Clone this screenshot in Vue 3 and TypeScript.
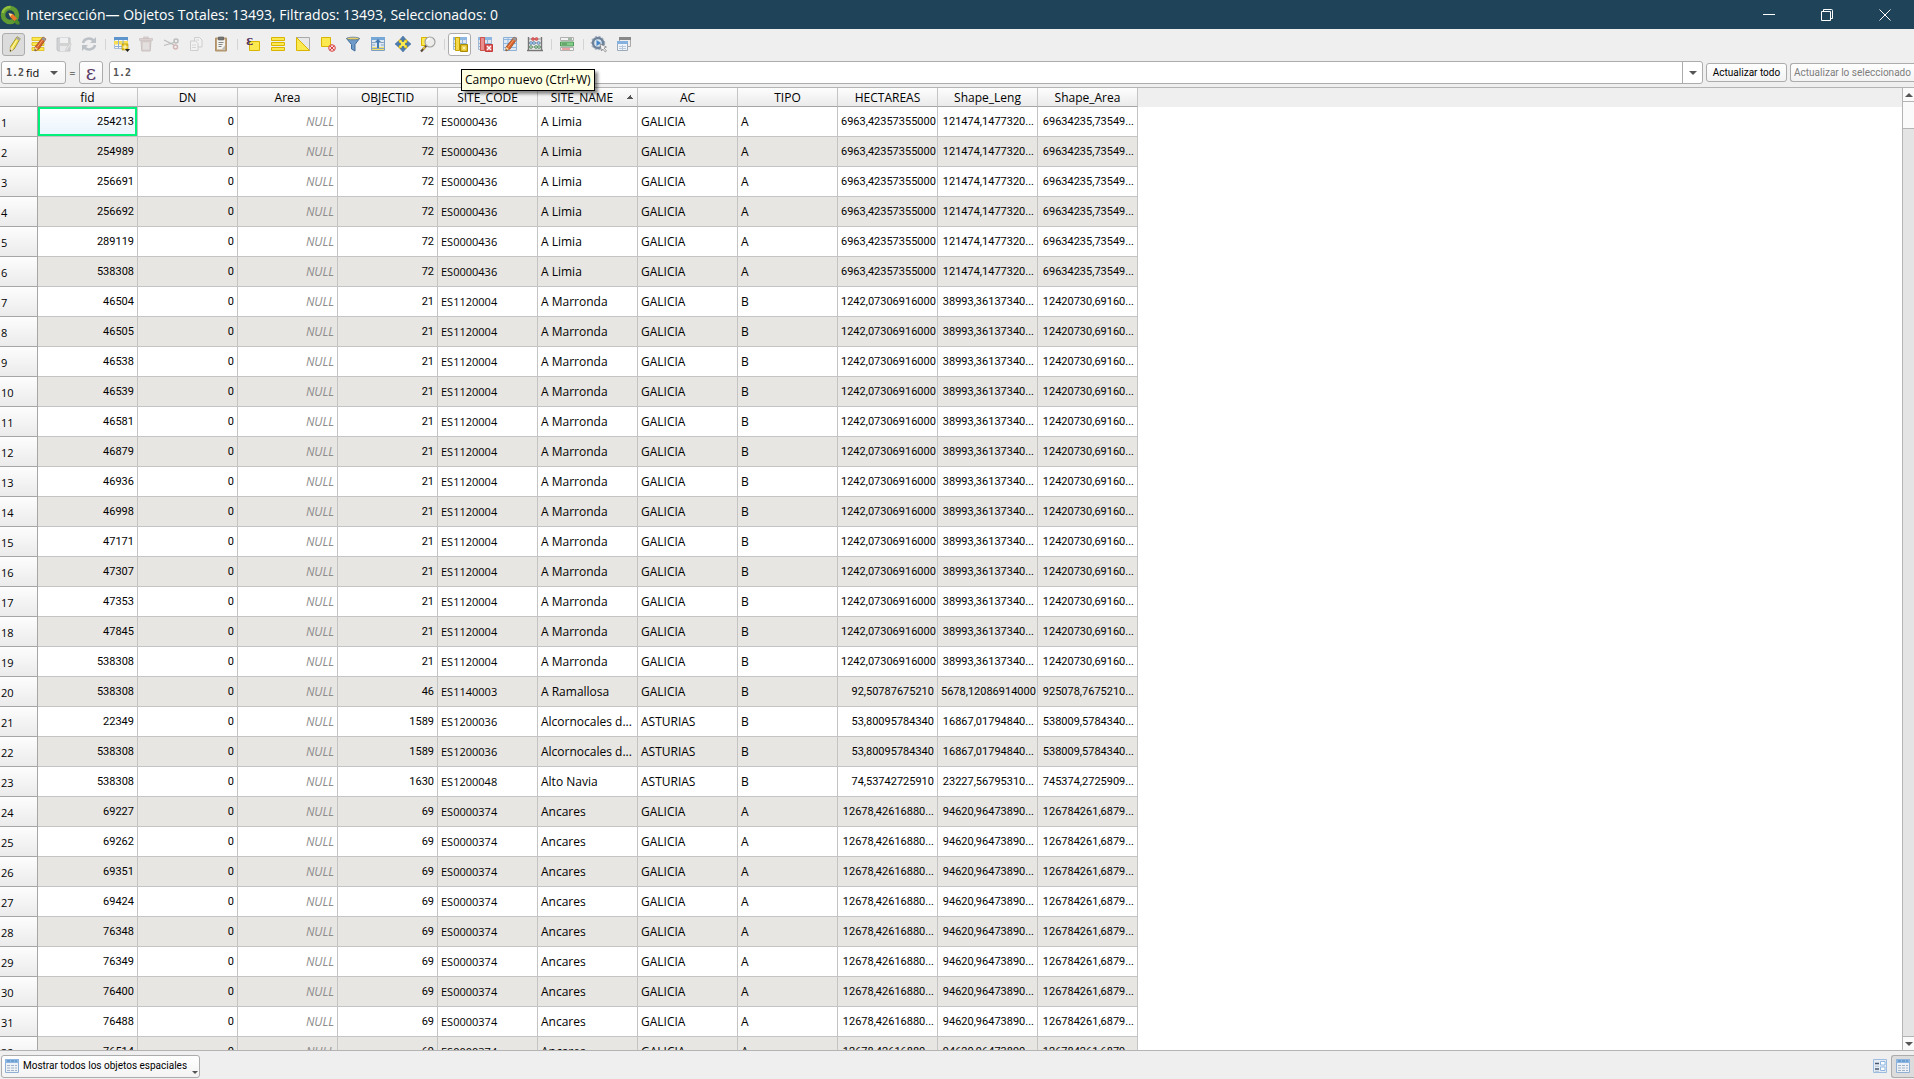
<script setup lang="ts">
import { ref } from 'vue'

interface Site {
  objectId: number
  code: string
  name: string
  region: string
  kind: string
  hectares: string
  length: string
  area: string
  fids: number[]
}

const sites: Site[] = [
  { objectId: 72, code: 'ES0000436', name: 'A Limia', region: 'GALICIA', kind: 'A', hectares: '6963,42357355000', length: '121474,1477320...', area: '69634235,73549...', fids: [254213, 254989, 256691, 256692, 289119, 538308] },
  { objectId: 21, code: 'ES1120004', name: 'A Marronda', region: 'GALICIA', kind: 'B', hectares: '1242,07306916000', length: '38993,36137340...', area: '12420730,69160...', fids: [46504, 46505, 46538, 46539, 46581, 46879, 46936, 46998, 47171, 47307, 47353, 47845, 538308] },
  { objectId: 46, code: 'ES1140003', name: 'A Ramallosa', region: 'GALICIA', kind: 'B', hectares: '92,50787675210', length: '5678,12086914000', area: '925078,7675210...', fids: [538308] },
  { objectId: 1589, code: 'ES1200036', name: 'Alcornocales d...', region: 'ASTURIAS', kind: 'B', hectares: '53,80095784340', length: '16867,01794840...', area: '538009,5784340...', fids: [22349, 538308] },
  { objectId: 1630, code: 'ES1200048', name: 'Alto Navia', region: 'ASTURIAS', kind: 'B', hectares: '74,53742725910', length: '23227,56795310...', area: '745374,2725909...', fids: [538308] },
  { objectId: 69, code: 'ES0000374', name: 'Ancares', region: 'GALICIA', kind: 'A', hectares: '12678,42616880...', length: '94620,96473890...', area: '126784261,6879...', fids: [69227, 69262, 69351, 69424, 76348, 76349, 76400, 76488, 76514] },
]

const rows = sites.flatMap((site) => site.fids.map((fid) => ({ ...site, fid })))
const columns = ['fid', 'DN', 'Area', 'OBJECTID', 'SITE_CODE', 'SITE_NAME', 'AC', 'TIPO', 'HECTAREAS', 'Shape_Leng', 'Shape_Area']

const field = ref('fid')
const expression = ref('')

const YELLOW = 'fill="#fce94f" stroke="#d9b500"'
const grid = '<path d="M1.5 1.5h13v12h-13z" fill="#dfe6ee" stroke="#a3bad2"/><path d="M1 1h14v3H1z" fill="#8db6e0"/><path d="M2 7.500h12M2 10.500h12M10.500 4v9" stroke="#8fb4da"/><path d="M3.500 1.500h4v13h-4z" fill="#f5d94a" stroke="#c4a000"/>'
const table = '<path d="M1.5 1.5h13v13h-13z" fill="#eef2f6" stroke="#8fb0d4"/><path d="M1 1h14v4H1z" fill="#8db6e0"/><path d="M3 3h3M7 3h3M11 3h2" stroke="#4f86c0"/><path d="M3 7.5h3M7 7.5h3M11 7.5h2M3 10h3M7 10h3M11 10h2M3 12.500h3M7 12.500h3M11 12.500h2" stroke="#9eb3c8"/>'
const pencil = '<path d="M12 1l3 2-7 10-4 2 0-4z" fill="#d9622b" stroke="#8d4522" stroke-width=".7"/><path d="M12 1l3 2-1.500 2-3-2z" fill="#999"/><path d="M4 11l3 2-3.500 2z" fill="#f4d9a0"/><path d="M4 13l1 1-1.500 1z" fill="#222"/><path d="M11.500 4L6 11.500" stroke="#f5a06a"/>'

const icons: Record<string, string> = {
  edit: '<path d="M11 .8l3.200 1.800-6 10.400-4 2.500.2-4.700z" fill="#f1df4b" stroke="#8c8420" stroke-width=".8"/><path d="M11 .8l3.200 1.800-1.200 2-3-1.800z" fill="#aaa"/><path d="M4.500 11l3 2-3.300 2.500z" fill="#f5e3bd"/><path d="M4.200 13.500l1 1-1.200 1z" fill="#222"/><path d="M10.500 4.500l-4.500 7.500" stroke="#fffbc0"/>',
  multi: `<path d="M1 1.500h12v3H1zM1 6.500h12v3H1zM1 11.500h12v3H1z" ${YELLOW} stroke-width=".7"/>${pencil}`,
  save: '<g opacity=".45"><path d="M1 2h13v13H2l-1-1z" fill="#aeb1b5" stroke="#909398"/><path d="M4 2h8v5H4z" fill="#f2f2f2"/><path d="M4 10h7v5H4z" fill="#e2e2e2"/><path d="M14 7l1.500 1-4 6-2 1 .3-2z" fill="#d5d5d5" stroke="#999" stroke-width=".6"/></g>',
  reload: '<g fill="none" stroke="#bcc1c7" stroke-width="2.600"><path d="M2 7a6 5.500 0 0 1 10.500-2.500M14 9a6 5.500 0 0 1-10.500 2.500"/></g><path d="M15 1v6H9zM1 15V9h6z" fill="#bcc1c7"/>',
  addRow: '<path d="M1.500 1.500h13v11h-13z" fill="#f3f5f7" stroke="#a8bdd4"/><path d="M1 1h14v3H1z" fill="#5e94cc"/><path d="M1 5h14v3.500H1z" fill="#f7dd52"/><path d="M2 10.500h8M5.500 4v8M10 4v8" stroke="#8fb0d4"/><path d="M9 8h6v6H9z" fill="#e8c520" stroke="#a98d00" stroke-width=".6"/><path d="M12 8.500v5M9.500 11h5" stroke="#fffbd0"/><path d="M12 13h5l-2.500 3z" fill="#222"/>',
  trash: '<g opacity=".5"><path d="M3 5h10l-.8 10H3.800z" fill="#c6b3b3" stroke="#a99797"/><path d="M1.500 2.500h13v2h-13zM5.500 1h5v1.500h-5z" fill="#c6b3b3" stroke="#a99797" stroke-width=".7"/><path d="M6 6.500v7M8 6.500v7M10 6.500v7" stroke="#eee"/></g>',
  cut: '<g fill="none" stroke="#bcbcbc"><path d="M1 4l10 5M1 9.500l10-3" stroke-width="1.300"/><circle cx="13" cy="5" r="2" stroke-width="1.500"/><circle cx="12.500" cy="11" r="2" stroke="#d3b5b5" stroke-width="1.500"/></g>',
  copy: '<g fill="#f2f2f2" stroke="#cecece"><path d="M6.500 1.500h5l2.500 2.500v7H6.500z"/><path d="M2.500 5h5L10 7.500v7H2.500z"/><path d="M4 9h4M4 11.500h4M8 4h3" stroke-width=".8"/></g>',
  paste: '<path d="M2.500 2h11v13h-11z" fill="#bda078" stroke="#b0926a"/><path d="M4 3.500h8v10H4z" fill="#f2f2ee"/><path d="M5.500 1h5v3h-5z" fill="#777" stroke="#555" stroke-width=".6"/><path d="M5.500 6.500h5M5.500 8.500h4M5.500 10.500h3" stroke="#888"/><path d="M8.500 13.500l3.500-4v4z" fill="#bbb"/>',
  selExpr: `<path d="M4.500 5.500h10v9h-10z" ${YELLOW}/><text x="1" y="9" font-family="DejaVu Serif,serif" font-size="12" font-weight="bold" fill="#5a3a66">ε</text>`,
  selAll: `<path d="M1.500 1.500h13v3h-13zM1.500 6.500h13v3h-13zM1.500 11.500h13v3h-13z" ${YELLOW}/>`,
  invert: '<path d="M1.500 1.500h13v13z" fill="#e8e8e8" stroke="#aaa"/><path d="M1.500 1.500l13 13h-13z" fill="#fce94f" stroke="#d9b500"/>',
  deselect: `<path d="M1.500 1.500h9v9h-9z" ${YELLOW}/><circle cx="12" cy="12" r="3.300" fill="#f8dcdc" stroke="#d94141"/><path d="M10 10l4 4M14 10l-4 4" stroke="#d94141"/>`,
  filter: '<path d="M1.500 2.500h13L10 8.500v6.500l-3.500-2V8.500z" fill="#6f9bc8" stroke="#416e9e"/><ellipse cx="8" cy="2.500" rx="6.500" ry="1.300" fill="#e9ce65" stroke="#58789a" stroke-width=".8"/>',
  top: '<path d="M1.500 1.500h13v13h-13z" fill="#dce7f2" stroke="#7d9fc4"/><path d="M1 1h14v3H1z" fill="#77a7d7"/><path d="M2 11h12v3H2z" fill="#f0e06a"/><path d="M2 6.500h3M11 6.500h3M2 9h3M11 9h3M2 12.500h12" stroke="#8ba5c0"/><path d="M8 3l3.500 3.500H9V12H7V6.500H4.500z" fill="#4178b0"/>',
  pan: `<path d="M4 4h8v8H4z" ${YELLOW}/><path d="M8 0l3 3.500H9v2H7v-2H5zM8 16l-3-3.500h2v-2h2v2h2zM0 8l3.500-3v2h2v2h-2v2zM16 8l-3.500 3V9h-2V7h2V5z" fill="#4f7fb4" stroke="#365f8c" stroke-width=".5"/>`,
  zoomSel: `<path d="M1.500 1.500h8v8h-8z" ${YELLOW}/><path d="M6.500 9.500L1 15.500" stroke="#5a4a38" stroke-width="2.200"/><path d="M5 11l-2 2" stroke="#e0be3a" stroke-width="2"/><circle cx="10" cy="6" r="5" fill="#ececea" stroke="#a2a2a0" stroke-width="1.200"/><path d="M7 5a3 3 0 0 1 3-2.500" fill="none" stroke="#fff" stroke-width="1.400"/>`,
  newField: `${grid}<path d="M8.500 8.500h7v7h-7z" fill="#ddb91b" stroke="#a88b06"/><path d="M12 9.500v5M9.500 12h5M10.300 10.300l3.400 3.400M13.700 10.300l-3.400 3.400" stroke="#fff8b8" stroke-width=".8"/>`,
  delField: `${grid}<path d="M3.500 1.500h4v13h-4z" fill="#e98d8d" stroke="#cc5252"/><path d="M8.500 8.500h7v7h-7z" fill="#de5959" stroke="#c23b3b"/><path d="M10 10l4 4M14 10l-4 4" stroke="#fff" stroke-width="1.400"/>`,
  organize: `<path d="M1.500 1.500h13v13h-13z" fill="#dfe9f3" stroke="#8fb0d4"/><path d="M2 3.500h12M2 7.500h12M2 11.500h12M6 2v12" stroke="#8db6e0"/>${pencil}`,
  abacus: '<path d="M1.500 1v13.500M14.500 1v13.500M0 14.500h16" stroke="#777" stroke-width="1.400"/><path d="M2 3h12M2 7h12M2 11h12" stroke="#999"/><g fill="#e26161" stroke="#b33" stroke-width=".5"><circle cx="6" cy="3" r="1.500"/><circle cx="9.500" cy="3" r="1.500"/></g><g fill="#9fc3e8" stroke="#4d7397" stroke-width=".6"><circle cx="4" cy="7" r="1.500"/><circle cx="7" cy="7" r="1.500"/><circle cx="11.500" cy="7" r="1.500"/></g><g fill="#a0d0a8" stroke="#467452" stroke-width=".6"><circle cx="4" cy="11" r="1.500"/><circle cx="9" cy="11" r="1.500"/><circle cx="12" cy="11" r="1.500"/></g>',
  conditional: '<path d="M1.500 1.500h13v3h-13zM1.500 11.500h13v3h-13z" fill="#f2f2f2" stroke="#b0b0b0"/><path d="M1.500 6h13v4h-13z" fill="#83cc8a" stroke="#539a5a"/><path d="M9 3h4M3 8h5" stroke="#4e7d55"/><path d="M3 13h8" stroke="#e05555"/>',
  actions: '<circle cx="7" cy="7" r="5" fill="#d9e6f2" stroke="#6e8299" stroke-width="2.400"/><circle cx="7" cy="7" r="6.700" fill="none" stroke="#8a9aad" stroke-width="1" stroke-dasharray="2 2"/><path d="M5.500 4l4.500 3-4.500 3z" fill="#4382c2"/><path d="M9 8l6.500 3-2.500 1 2.500 3-1.200 1-2.600-3-1.200 2z" fill="#f5f5f5" stroke="#777" stroke-width=".7"/>',
  dock: '<path d="M3.500 1.500h11v9h-11z" fill="#eee" stroke="#aaa"/><path d="M3 1h12v3H3z" fill="#888"/><path d="M1.500 5.500h10v9h-10z" fill="#eef4fa" stroke="#9aaabb"/><path d="M1 5h11v3H1z" fill="#84b1df"/><path d="M3 10.500h7M3 12.500h7M6.500 9v5" stroke="#b7c9db"/>',
  table,
  form: '<path d="M1.500 1.500h13v13h-13z" fill="#e5ecf4" stroke="#9dbde0"/><path d="M3 5.500h4M3 11h4" stroke="#445872" stroke-width="1.400"/><path d="M8.500 3.500h4.500v3.500H8.500zM8.500 9h4.500v3.500H8.500z" fill="#fff" stroke="#8fb7e2"/><path d="M3 8.300h4M3 13.300h4" stroke="#b5c4d4"/>',
}

interface Tool { icon: string; label: string; state?: string; tip?: boolean }
const groups: Tool[][] = [
  [
    { icon: 'edit', label: 'Conmutar edición', state: 'checked' },
    { icon: 'multi', label: 'Edición múltiple' },
    { icon: 'save', label: 'Guardar cambios' },
    { icon: 'reload', label: 'Recargar tabla' },
  ],
  [
    { icon: 'addRow', label: 'Añadir objeto' },
    { icon: 'trash', label: 'Borrar objetos' },
    { icon: 'cut', label: 'Cortar' },
    { icon: 'copy', label: 'Copiar' },
    { icon: 'paste', label: 'Pegar' },
  ],
  [
    { icon: 'selExpr', label: 'Seleccionar por expresión' },
    { icon: 'selAll', label: 'Seleccionar todo' },
    { icon: 'invert', label: 'Invertir selección' },
    { icon: 'deselect', label: 'Deseleccionar' },
    { icon: 'filter', label: 'Filtrar' },
    { icon: 'top', label: 'Mover selección arriba' },
    { icon: 'pan', label: 'Desplazar a la selección' },
    { icon: 'zoomSel', label: 'Zum a la selección' },
  ],
  [
    { icon: 'newField', label: 'Campo nuevo', state: 'hovered', tip: true },
    { icon: 'delField', label: 'Borrar campo' },
    { icon: 'organize', label: 'Organizar columnas' },
    { icon: 'abacus', label: 'Calculadora de campos' },
  ],
  [{ icon: 'conditional', label: 'Formato condicional' }],
  [
    { icon: 'actions', label: 'Acciones' },
    { icon: 'dock', label: 'Acoplar tabla' },
  ],
]
</script>

<template>
  <div class="window">
    <header class="titlebar">
      <svg class="logo" viewBox="0 0 20 20" aria-hidden="true">
        <circle cx="10" cy="10" r="7" fill="none" stroke="#5f9a33" stroke-width="4.500" />
        <path d="M2.500 8a8 8 0 0 1 8-6" fill="none" stroke="#93c13d" stroke-width="2.500" />
        <path d="M14 12l5.500 5v2.500h-3L12 15z" fill="#4f8a2c" />
        <path d="M10 9l3 0 4 4.500-2.500 2.500-4.500-4z" fill="#e9772a" />
        <path d="M8.500 8l4 1-2.500 2.800z" fill="#f9df8c" />
      </svg>
      <h1>Intersección— Objetos Totales: 13493, Filtrados: 13493, Seleccionados: 0</h1>
      <button type="button" aria-label="Minimizar"><svg viewBox="0 0 12 12"><path d="M0 5.500h12" /></svg></button>
      <button type="button" aria-label="Restaurar">
        <svg viewBox="0 0 12 12"><path d="M.5 2.500h9v9h-9zM2.500 2V.5h8q1 0 1 1v8H10" /></svg>
      </button>
      <button type="button" aria-label="Cerrar"><svg viewBox="0 0 12 12"><path d="M.5.5l11 11M11.500.5l-11 11" /></svg></button>
    </header>

    <div class="toolbar" role="toolbar">
      <div v-for="(group, g) in groups" :key="g" class="group">
        <div v-for="tool in group" :key="tool.icon" class="slot">
          <button type="button" class="tool" :class="tool.state" :aria-label="tool.label">
            <svg viewBox="0 0 16 16" v-html="icons[tool.icon]"></svg>
          </button>
          <div v-if="tool.tip" class="tooltip" role="tooltip">Campo nuevo (Ctrl+W)</div>
        </div>
      </div>
    </div>

    <form class="calc" @submit.prevent>
      <div class="box field">
        <span class="type">1.2</span>
        <select v-model="field" aria-label="Campo">
          <option v-for="c in columns" :key="c">{{ c }}</option>
        </select>
        <i class="down"></i>
      </div>
      <span class="equals">=</span>
      <button type="button" class="box epsilon" aria-label="Expresión">ε</button>
      <div class="box expression">
        <span class="type">1.2</span>
        <input v-model="expression" type="text" aria-label="Valor" />
        <button type="button" class="drop" aria-label="Expresiones recientes"><i class="down"></i></button>
      </div>
      <button type="button" class="box update">Actualizar todo</button>
      <button type="button" class="box update last" disabled>Actualizar lo seleccionado</button>
    </form>

    <main class="view">
      <div class="sheet">
        <table>
          <thead>
            <tr>
              <th class="num"></th>
              <th v-for="c in columns" :key="c" scope="col" :class="{ sorted: c === 'SITE_NAME' }">{{ c }}</th>
              <td class="rest"></td>
            </tr>
          </thead>
          <tbody>
            <tr v-for="(row, i) in rows" :key="i">
              <th class="num" scope="row">{{ i + 1 }}</th>
              <td class="right" :class="{ current: i === 0 }">{{ row.fid }}</td>
              <td class="right">0</td>
              <td class="right null">NULL</td>
              <td class="right">{{ row.objectId }}</td>
              <td class="code">{{ row.code }}</td>
              <td>{{ row.name }}</td>
              <td>{{ row.region }}</td>
              <td>{{ row.kind }}</td>
              <td class="right">{{ row.hectares }}</td>
              <td class="right">{{ row.length }}</td>
              <td class="right">{{ row.area }}</td>
              <td class="rest"></td>
            </tr>
          </tbody>
        </table>
      </div>
      <div class="scroll" aria-hidden="true">
        <span class="arrow"><i class="up"></i></span>
        <span class="thumb"></span>
        <span class="arrow end"><i class="down"></i></span>
      </div>
    </main>

    <footer class="status">
      <button type="button" class="box filter">
        <svg viewBox="0 0 16 16" v-html="icons.table"></svg>
        Mostrar todos los objetos espaciales
        <i class="down"></i>
      </button>
      <button type="button" class="tool" aria-label="Vista de formulario"><svg viewBox="0 0 16 16" v-html="icons.form"></svg></button>
      <button type="button" class="tool checked" aria-label="Vista de tabla"><svg viewBox="0 0 16 16" v-html="icons.table"></svg></button>
    </footer>
  </div>
</template>

<style>
body {
  margin: 0;
}
</style>

<style scoped>
.window {
  display: flex;
  flex-direction: column;
  height: 100vh;
  overflow: hidden;
  background: #efefef;
  color: #000;
  font: 12px/16px "Open Sans", "Noto Sans", sans-serif;
}
button,
input,
select {
  margin: 0;
  padding: 0;
  border: 0;
  background: none;
  color: inherit;
  font: inherit;
  outline: none;
}
.titlebar {
  display: flex;
  align-items: center;
  flex: none;
  height: 29px;
  background: #1f4358;
  color: #fff;
}
.logo {
  width: 20px;
  height: 20px;
  margin-right: 6px;
}
h1 {
  flex: 1;
  margin: 0;
  font-size: 14px;
  font-weight: 400;
  line-height: 20px;
}
.titlebar button {
  display: flex;
  align-items: center;
  justify-content: center;
  width: 58px;
  height: 29px;
}
.titlebar button svg {
  width: 12px;
  height: 12px;
  fill: none;
  stroke: #fff;
}
.toolbar {
  display: flex;
  flex: none;
  align-items: center;
  height: 32px;
  padding: 0 2px 2px;
  box-sizing: border-box;
}
.group {
  display: flex;
  gap: 2px;
}
.group + .group {
  margin-left: 5px;
  padding-left: 4px;
  position: relative;
}
.group + .group::before {
  content: "";
  position: absolute;
  left: 0;
  top: 6px;
  width: 1px;
  height: 11px;
  background: #d4d4d4;
}
.slot {
  position: relative;
}
.tool {
  display: flex;
  align-items: center;
  justify-content: center;
  width: 23px;
  height: 23px;
  box-sizing: border-box;
  border: 1px solid transparent;
  border-radius: 3px;
}
.tool svg {
  flex: none;
  width: 16px;
  height: 16px;
  overflow: visible;
}
.checked {
  border-color: #acacac;
  background: #dcdcdc;
}
.hovered {
  border-color: #acacac;
  background: #fdfdfd;
}
.tooltip {
  position: absolute;
  z-index: 2;
  left: 13px;
  top: 36px;
  height: 22px;
  box-sizing: border-box;
  padding: 0 3px;
  border: 1px solid #000;
  background: #ffffe1;
  box-shadow: 3px 3px 3px rgba(0, 0, 0, 0.45);
  line-height: 20px;
  white-space: nowrap;
}
.calc {
  display: flex;
  align-items: center;
  flex: none;
  height: 26px;
  padding: 0 0 3px 1px;
  box-sizing: border-box;
  font-size: 11px;
}
.box {
  display: flex;
  align-items: center;
  height: 23px;
  box-sizing: border-box;
  border: 1px solid #acacac;
  border-radius: 3px;
  background: linear-gradient(#fff, #f3f3f3);
}
.field {
  width: 65px;
  padding: 0 7px 0 4px;
}
.type {
  flex: none;
  color: #555;
  font: bold 10px/12px "DejaVu Sans Mono", monospace;
}
.field select {
  flex: 1;
  min-width: 0;
  margin-left: 2px;
  appearance: none;
}
.down,
.up {
  flex: none;
  border: 4px solid transparent;
  border-bottom-width: 0;
  border-top-color: #555;
}
.up {
  border-width: 0 4px 4px;
  border-bottom-color: #555;
}
.equals {
  width: 13px;
  text-align: center;
}
.epsilon {
  justify-content: center;
  width: 24px;
  color: #5a3a66;
  font: 20px/16px "DejaVu Serif", serif;
}
.expression {
  flex: 1;
  margin-left: 6px;
  padding-left: 3px;
  background: #fff;
}
.expression input {
  flex: 1;
  min-width: 0;
}
.drop {
  display: flex;
  align-items: center;
  justify-content: center;
  align-self: stretch;
  width: 20px;
  border-left: 1px solid #acacac;
}
.update {
  justify-content: center;
  width: 81px;
  height: 19px;
  margin-left: 3px;
  font: 10px/16px Roboto, sans-serif;
  white-space: nowrap;
}
.last {
  width: 124px;
  border-right: 0;
  border-radius: 3px 0 0 3px;
  color: #7d7d7d;
}
.view {
  display: flex;
  flex: 1;
  min-height: 0;
  border-top: 1px solid #b4b4b4;
  border-bottom: 1px solid #b4b4b4;
  background: #fff;
}
.sheet {
  flex: 1;
  min-width: 0;
  overflow: hidden;
}
table {
  width: 100%;
  table-layout: fixed;
  border-spacing: 0;
}
th,
td {
  width: 100px;
  height: 30px;
  box-sizing: border-box;
  padding: 0 3px;
  border-right: 1px solid #c4c4c4;
  border-bottom: 1px solid #c4c4c4;
  font-weight: 400;
  text-align: left;
  white-space: nowrap;
}
thead th {
  height: 19px;
  padding-top: 2px;
  border-bottom-color: #a6a6a6;
  background: linear-gradient(#fdfdfd, #ebebeb);
  text-align: center;
}
thead th.sorted {
  padding-right: 14px;
  background:
    conic-gradient(from 135deg at 50% 0, #555 90deg, transparent 0) 88px 7px / 8px 4px no-repeat,
    linear-gradient(#fdfdfd, #ebebeb);
}
th.num {
  width: 38px;
  padding: 2px 0 0 1px;
  border-color: #a6a6a6;
  background: linear-gradient(#fdfdfd, #ebebeb);
  font-size: 11px;
}
tbody tr:nth-child(even) td {
  background: #e8e6e2;
}
.right {
  font: 11px/16px Roboto, sans-serif;
  text-align: right;
}
.code {
  font-size: 11px;
}
td.null {
  color: #8c8c8c;
  font: italic 12px/16px "Open Sans", sans-serif;
}
.current {
  background: linear-gradient(#fff, #e9f4fd);
  box-shadow: inset 0 0 0 2px #00f07a;
}
tr td.rest,
tbody tr:nth-child(even) td.rest {
  width: auto;
  border: 0;
  background: #fff;
}
thead tr td.rest {
  height: 19px;
  background: #efefef;
}
.scroll {
  display: flex;
  flex: none;
  flex-direction: column;
  width: 11px;
  overflow: hidden;
  border-left: 1px solid #b4b4b4;
  background: #e4e4e4;
}
.arrow {
  display: flex;
  align-items: center;
  justify-content: center;
  flex: none;
  height: 13px;
  border-bottom: 1px solid #b4b4b4;
  background: #fafafa;
}
.arrow.end {
  margin-top: auto;
  border-top: 1px solid #b4b4b4;
  border-bottom: 0;
}
.thumb {
  flex: none;
  height: 26px;
  border-bottom: 1px solid #b4b4b4;
  background: #fafafa;
}
.status {
  display: flex;
  align-items: center;
  flex: none;
  height: 28px;
  padding: 2px 0 0 1px;
  box-sizing: border-box;
}
.filter {
  gap: 3px;
  margin-right: auto;
  padding: 0 1px 0 2px;
  font: 10px/16px Roboto, sans-serif;
  white-space: nowrap;
}
.filter svg {
  width: 16px;
  height: 16px;
}
.filter .down {
  align-self: flex-end;
  margin: 0 0 3px 2px;
  border-width: 3px 3px 0;
}
.status .checked {
  border-right: 0;
  border-radius: 3px 0 0 3px;
}
</style>
